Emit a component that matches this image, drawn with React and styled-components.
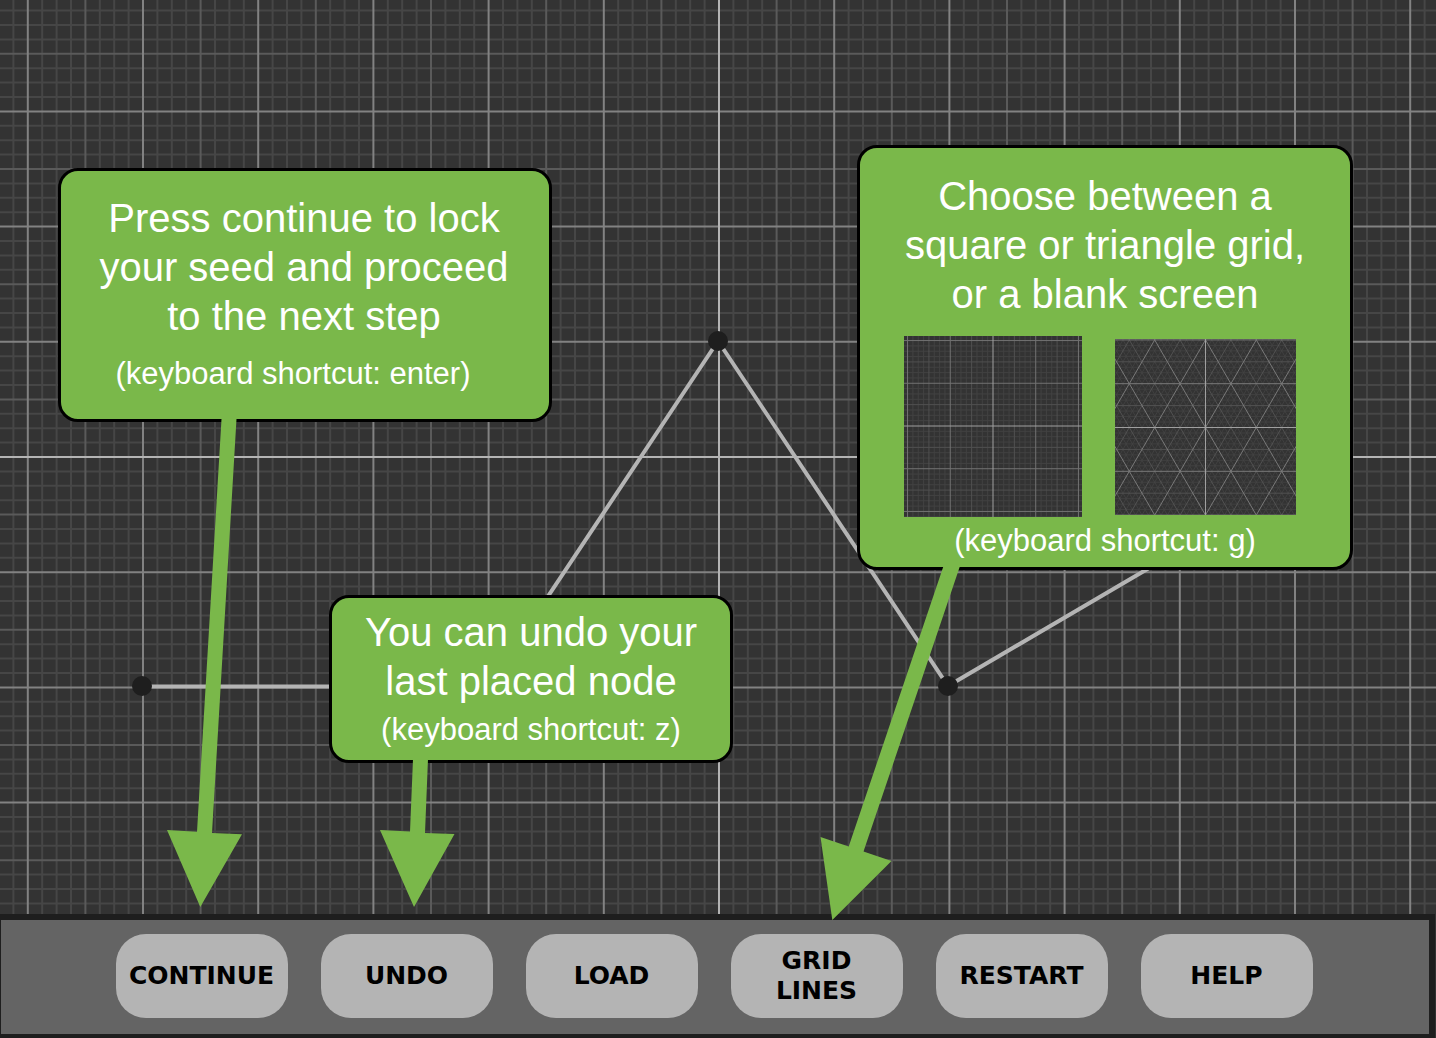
import React from "react";
import styled, { createGlobalStyle } from "styled-components";

const GREEN = "#7ab84a";

const GlobalStyle = createGlobalStyle`
  *, *::before, *::after { box-sizing: border-box; }
  body { margin: 0; background: #333333; }
`;

const Page = styled.div`
  display: flex;
  flex-direction: column;
  min-height: 100vh;
  overflow: hidden;
`;

const Board = styled.main`
  position: relative;
  flex: 1;
  background: #333333;
`;

const Drawing = styled.svg`
  position: absolute;
  inset: 0;
  width: 100%;
  height: 100%;
`;

/* Arrows lie over the callouts and may reach past the board's lower edge. */
const Arrows = styled(Drawing)`
  overflow: visible;
  pointer-events: none;
`;

/* Zero-sized anchor at the centre of the board; callouts are pinned from it. */
const Origin = styled.div`
  position: absolute;
  left: 50%;
  top: 50%;
`;

const Callout = styled.section`
  position: absolute;
  left: ${(p) => p.$x}px;
  top: ${(p) => p.$y}px;
  width: ${(p) => p.$width}px;
  padding: ${(p) => p.$pad};
  border: 3px solid #000;
  border-radius: 20px;
  background: ${GREEN};
  color: #fff;
  font-family: "Helvetica Neue", "Liberation Sans", Arial, sans-serif;
  text-align: center;
`;

const Message = styled.p`
  margin: 0;
  font-size: 40px;
  line-height: 49px;
  white-space: nowrap;
`;

const Shortcut = styled.p`
  margin: ${(p) => p.$gap}px 0 0;
  padding-right: ${(p) => p.$end || 0}px;
  font-size: 31px;
  line-height: 40px;
  white-space: nowrap;
`;

const Previews = styled.div`
  display: flex;
  justify-content: center;
  align-items: center;
  gap: 33px;
  margin-top: 17px;
  padding-right: 10px;
`;

const Preview = styled.svg`
  display: block;
  background: #333333;
`;

const Toolbar = styled.nav`
  display: flex;
  justify-content: center;
  align-items: center;
  gap: 33px;
  height: 124px;
  margin-right: 1px;
  padding: 0 2px 2px 0;
  border: solid #1e1e1e;
  border-width: 6px 6px 4px 1px;
  background: #646464;
`;

const ToolButton = styled.button`
  width: 172px;
  height: 84px;
  padding: 0 12px;
  border: 0;
  border-radius: 30px;
  background: #b4b4b4;
  color: #000;
  font: bold 25px/30px Verdana, "DejaVu Sans", sans-serif;
  text-transform: uppercase;
  cursor: pointer;
`;

const STEPS = Array.from({ length: 241 }, (_, i) => i - 120);

const LEVELS = [
  { test: (i) => i % 4 !== 0, color: "#464646" },
  { test: (i) => i % 4 === 0 && i % 8 !== 0, color: "#5a5a5a" },
  { test: (i) => i % 8 === 0 && i !== 0, color: "#828282" },
  { test: (i) => i === 0, color: "#b4b4b4" },
];

function SquareGrid({ step, extent, weight, colors }) {
  return LEVELS.map((level, n) => {
    const d = STEPS.filter((i) => level.test(i) && Math.abs(i * step) <= extent)
      .map((i) => `M${i * step} ${-extent}V${extent}M${-extent} ${i * step}H${extent}`)
      .join("");
    return (
      <path key={n} d={d} fill="none" stroke={colors ? colors[n] : level.color} strokeWidth={weight} />
    );
  });
}

function TriangleGrid({ side, extent }) {
  const step = side / 8;
  const rise = 43.8 / 8;
  const slope = 43.8 / (side / 2);
  const colors = ["#444444", "#525252", "#7a7a7a", "#a0a0a0"];
  return LEVELS.map((level, n) => {
    const rows = STEPS.filter((i) => level.test(i) && Math.abs(i * rise) <= extent)
      .map((i) => `M${-extent} ${i * rise}H${extent}`);
    const diagonals = STEPS.filter((i) => (n === 2 ? i % 8 === 0 : n < 2 && level.test(i)))
      .filter((i) => Math.abs(i) < 48)
      .map((i) => {
        const x = i * step;
        const dx = extent / slope;
        return `M${x - dx} ${-extent}L${x + dx} ${extent}M${x + dx} ${-extent}L${x - dx} ${extent}`;
      });
    const axis = n === 3 ? [`M0 ${-extent}V${extent}`] : [];
    return (
      <path
        key={n}
        d={[...rows, ...diagonals, ...axis].join("")}
        fill="none"
        stroke={colors[n]}
        strokeWidth={n === 0 ? 0.8 : 1}
      />
    );
  });
}

const NODES = [
  [-576, 229],
  [0, -116],
  [230, 229],
];

/* Shaft and head of each arrow, measured from the centre of the board. */
const ARROWS = [
  "M-496.5 -38H-481.5L-506 376L-476 377.3L-517.7 450L-551 373L-521 374.8Z",
  "M-305 302H-290L-293 376L-263.5 377L-304 450L-338 373L-308 374.5Z",
  "M225.5 109H242L145.5 394.5L173.5 404L114.3 463L102.5 380L130.7 389.5Z",
];

const TOOLS = ["Continue", "Undo", "Load", "Grid lines", "Restart", "Help"];

export default function App() {
  return (
    <>
      <GlobalStyle />
      <Page>
        <Board>
          <Drawing aria-hidden="true">
            <svg x="50%" y="50%" overflow="visible">
              <g transform="translate(1 0)">
                <SquareGrid step={14.4} extent={1700} weight={2} />
              </g>
              <path
                d="M-576 229.5H-230L0 -116L230 229L576 26"
                fill="none"
                stroke="#b4b4b4"
                strokeWidth="4"
              />
              {NODES.map(([x, y]) => (
                <circle key={x} cx={x} cy={y} r="10" fill="#1e1e1e" />
              ))}
            </svg>
          </Drawing>
          <Origin>
            <Callout $x={-660} $y={-289} $width={494} $pad="23px 2px 25px 0">
              <Message>Press continue to lock<br />your seed and proceed<br />to the next step</Message>
              <Shortcut $gap={13} $end={22}>(keyboard shortcut: enter)</Shortcut>
            </Callout>
            <Callout $x={-389} $y={138} $width={404} $pad="10px 0">
              <Message>You can undo your<br />last placed node</Message>
              <Shortcut $gap={4}>(keyboard shortcut: z)</Shortcut>
            </Callout>
            <Callout $x={139} $y={-312} $width={496} $pad="24px 0 6px">
              <Message>Choose between a<br />square or triangle grid,<br />or a blank screen</Message>
              <Previews>
                <Preview width="178" height="181" viewBox="-89 -90 178 181" role="img" aria-label="Square grid">
                  <SquareGrid
                    step={5.34}
                    extent={100}
                    weight={1}
                    colors={["#424242", "#505050", "#727272", "#a0a0a0"]}
                  />
                </Preview>
                <Preview width="181" height="176" viewBox="-90.5 -88.5 181 176" role="img" aria-label="Triangle grid">
                  <TriangleGrid side={50.8} extent={100} />
                </Preview>
              </Previews>
              <Shortcut $gap={4}>(keyboard shortcut: g)</Shortcut>
            </Callout>
          </Origin>
          <Arrows aria-hidden="true">
            <svg x="50%" y="50%" overflow="visible">
              {ARROWS.map((d) => (
                <path key={d} d={d} fill={GREEN} />
              ))}
            </svg>
          </Arrows>
        </Board>
        <Toolbar aria-label="Drawing tools">
          {TOOLS.map((name) => (
            <ToolButton key={name} type="button">{name}</ToolButton>
          ))}
        </Toolbar>
      </Page>
    </>
  );
}
